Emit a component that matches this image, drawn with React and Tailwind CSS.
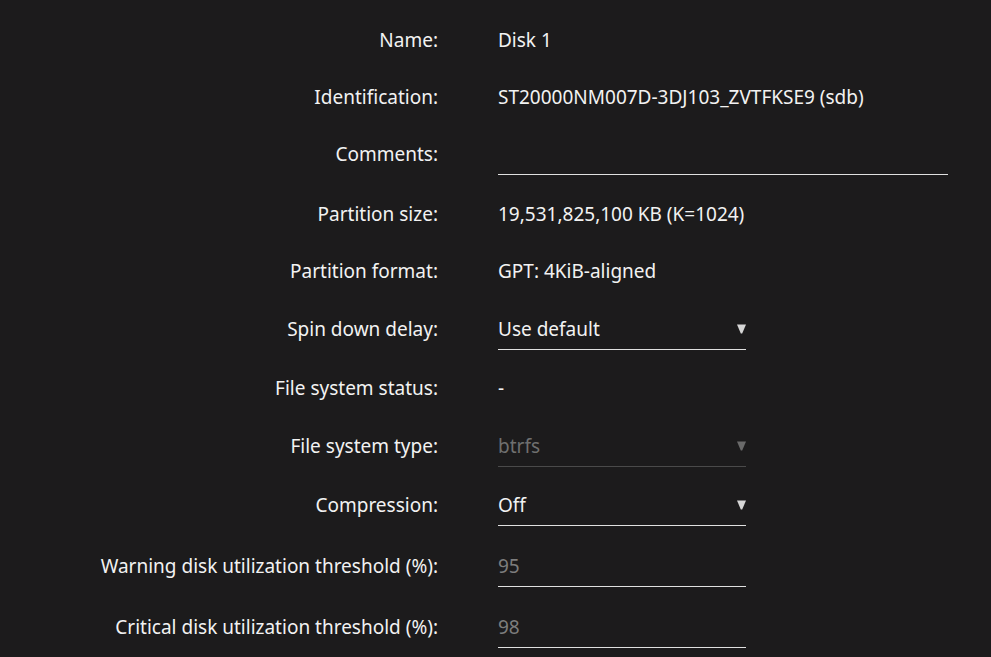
import React from 'react'

const labelCls = 'w-[438px] shrink-0 text-right leading-[40px]'
const valueCls = 'ml-[60px] leading-[40px]'

// plain text row
const InfoRow = ({ label, value, h = 'h-[57px]' }) => (
  <div className={`flex ${h}`}>
    <div className={labelCls}>{label}</div>
    <div className={valueCls}>{value}</div>
  </div>
)

const Caret = ({ className }) => (
  <svg width="9" height="10" viewBox="0 0 9 10" className={className}>
    <path d="M0 0.5 H9 L5.2 9.5 H3.8 Z" fill="currentColor" />
  </svg>
)

// select with a small triangle on the right
const SelectRow = ({ label, value, disabled, h = 'h-[59px]' }) => (
  <div className={`flex ${h}`}>
    <div className={labelCls}>{label}</div>
    <div
      className={`ml-[60px] w-[248px] h-[41px] flex items-start justify-between border-b ${
        disabled ? 'border-[#4a4a4a] text-[#6f6f6f]' : 'border-[#e0e0e0] text-[#f2f2f2]'
      }`}
    >
      <span className="leading-[40px]">{value}</span>
      <Caret className={`mt-[15px] ${disabled ? 'text-[#6a6a6a]' : 'text-[#d6d6d6]'}`} />
    </div>
  </div>
)

const InputRow = ({ label, value, w = 'w-[248px]', h = 'h-[61px]' }) => (
  <div className={`flex ${h}`}>
    <div className={labelCls}>{label}</div>
    <div className={`ml-[60px] ${w} h-[41px] border-b border-[#e0e0e0] leading-[40px] text-[#7d7d7d]`}>
      {value}
    </div>
  </div>
)

export default function App() {
  return (
    <div
      className="min-h-screen bg-[#1c1b1c] text-[#f2f2f2] text-[19px] pt-[20px]"
      style={{ fontFamily: '"Noto Sans", "Open Sans", sans-serif' }}
    >
      <InfoRow label="Name:" value="Disk 1" />
      <InfoRow label="Identification:" value="ST20000NM007D-3DJ103_ZVTFKSE9 (sdb)" />
      <InputRow label="Comments:" value="" w="w-[450px]" h="h-[60px]" />
      <InfoRow label="Partition size:" value="19,531,825,100 KB (K=1024)" />
      <InfoRow label="Partition format:" value="GPT: 4KiB-aligned" h="h-[58px]" />
      <SelectRow label="Spin down delay:" value="Use default" />
      <InfoRow label="File system status:" value="-" h="h-[58px]" />
      <SelectRow label="File system type:" value="btrfs" disabled />
      <SelectRow label="Compression:" value="Off" h="h-[61px]" />
      <InputRow label="Warning disk utilization threshold (%):" value="95" />
      <InputRow label="Critical disk utilization threshold (%):" value="98" />
    </div>
  )
}
